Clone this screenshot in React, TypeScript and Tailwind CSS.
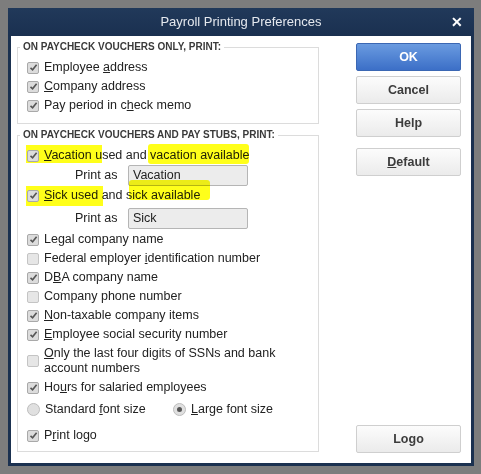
import React from 'react';

type Item = { label: React.ReactNode; checked: boolean };

const u = (s: string) => <span className="underline underline-offset-[1px]">{s}</span>;

const CheckBox: React.FC<{ checked: boolean }> = ({ checked }) => (
  <span
    className={`relative flex h-[12px] w-[12px] shrink-0 items-center justify-center rounded-[2px] border ${
      checked ? 'border-[#a9a9a9] bg-[#dcdcdc]' : 'border-[#c4c4c4] bg-[#e6e6e6]'
    }`}
  >
    {checked && (
      <svg width="9" height="9" viewBox="0 0 9 9">
        <path d="M1.5 4.8 L3.6 6.8 L7.6 1.8" fill="none" stroke="#555" strokeWidth="1.6" />
      </svg>
    )}
  </span>
);

const Radio: React.FC<{ checked: boolean }> = ({ checked }) => (
  <span className="flex h-[13px] w-[13px] shrink-0 items-center justify-center rounded-full border border-[#bdbdbd] bg-[#e0e0e0]">
    {checked && <span className="h-[5px] w-[5px] rounded-full bg-[#555]" />}
  </span>
);

const Row: React.FC<{ item: Item }> = ({ item }) => (
  <div className="flex h-[19px] items-center gap-[5px] pl-[9px]">
    <CheckBox checked={item.checked} />
    <span>{item.label}</span>
  </div>
);

const Group: React.FC<{ title: string; children: React.ReactNode; className?: string }> = ({ title, children, className }) => (
  <fieldset className={`border border-[#dcdcdc] px-0 ${className ?? ''}`}>
    <legend className="ml-[2px] px-[3px] text-[10px] font-bold leading-[12px] text-[#3a3a3a]">{title}</legend>
    {children}
  </fieldset>
);

const Btn: React.FC<{ children: React.ReactNode; primary?: boolean; className?: string }> = ({ children, primary, className }) => (
  <button
    className={`h-[28px] w-[105px] rounded-[2px] border text-[12.5px] font-bold ${
      primary
        ? 'border-[#3b67b3] bg-gradient-to-b from-[#6a9be0] to-[#3c6fc7] text-white'
        : 'border-[#cfcfcf] bg-gradient-to-b from-[#fcfcfc] to-[#ebebeb] text-[#3c3c3c]'
    } ${className ?? ''}`}
  >
    {children}
  </button>
);

const Hl: React.FC<{ className: string }> = ({ className }) => (
  <span className={`pointer-events-none absolute bg-[#ffff1a] mix-blend-multiply ${className}`} />
);

const PrintAs: React.FC<{ value: string }> = ({ value }) => (
  <div className="flex items-center pl-[57px]">
    <span className="w-[53px]">Print as</span>
    <div className="flex h-[21px] w-[120px] items-center rounded-[2px] border border-[#b5b5b5] bg-[#ececec] pl-[4px]">
      {value}
    </div>
  </div>
);

export default function App() {
  const first: Item[] = [
    { label: <>Employee {u('a')}ddress</>, checked: true },
    { label: <>{u('C')}ompany address</>, checked: true },
    { label: <>Pay period in c{u('h')}eck memo</>, checked: true },
  ];
  const rest: Item[] = [
    { label: <>Le{u('g')}al company name</>, checked: true },
    { label: <>Federal employer {u('i')}dentification number</>, checked: false },
    { label: <>D{u('B')}A company name</>, checked: true },
    { label: <>Company phone number</>, checked: false },
    { label: <>{u('N')}on-taxable company items</>, checked: true },
    { label: <>{u('E')}mployee social security number</>, checked: true },
  ];

  return (
    <div className="h-[474px] w-[481px] bg-[#7d7d7d] pl-[8px] pt-[8px] font-['Liberation_Sans',Arial,sans-serif] text-[12.5px] text-[#222]">
      <div className="flex h-[458px] w-[466px] flex-col rounded-t-[3px] bg-[#1b3150]">
        <div className="relative flex h-[28px] items-center justify-center bg-gradient-to-b from-[#21395a] to-[#1a3050] text-[13px] text-[#e4e8ee]">
          Payroll Printing Preferences
          <span className="absolute right-[11px] top-[8px] text-[14px] font-bold leading-[12px] text-white">✕</span>
        </div>
        <div className="mx-[3px] mb-[3px] flex flex-1 bg-white">
          <div className="flex w-[308px] flex-col gap-[5px] pl-[6px] pt-[5px]">
            <Group title="ON PAYCHECK VOUCHERS ONLY, PRINT:" className="h-[83px]">
              <div className="pt-[5px]">
                {first.map((it, i) => (
                  <Row key={i} item={it} />
                ))}
              </div>
            </Group>
            <Group title="ON PAYCHECK VOUCHERS AND PAY STUBS, PRINT:" className="h-[323px]">
              <div className="pt-[5px]">
                <div className="relative">
                  <Hl className="left-[8px] top-[-1px] h-[18px] w-[76px]" />
                  <Hl className="left-[130px] top-[-2px] h-[20px] w-[101px] rounded-[3px]" />
                  <Row item={{ label: <>{u('V')}acation used and vacation available</>, checked: true }} />
                </div>
                <PrintAs value="Vacation" />
                <div className="relative">
                  <Hl className="left-[8px] top-[0px] h-[20px] w-[77px]" />
                  <Hl className="left-[111px] top-[-6px] h-[20px] w-[81px] rounded-[3px]" />
                  <Row item={{ label: <>{u('S')}ick used and sick available</>, checked: true }} />
                </div>
                <div className="mt-[3px]">
                  <PrintAs value="Sick" />
                </div>
                <div className="mt-[1px]">
                  {rest.map((it, i) => (
                    <Row key={i} item={it} />
                  ))}
                </div>
                <div className="flex h-[34px] items-center gap-[5px] pl-[9px]">
                  <CheckBox checked={false} />
                  <span className="leading-[15px]">
                    {u('O')}nly the last four digits of SSNs and bank
                    <br />
                    account numbers
                  </span>
                </div>
                <Row item={{ label: <>Ho{u('u')}rs for salaried employees</>, checked: true }} />
                <div className="mt-[2px] flex h-[20px] items-center pl-[9px]">
                  <div className="flex w-[146px] items-center gap-[5px]">
                    <Radio checked={false} />
                    <span>Standard {u('f')}ont size</span>
                  </div>
                  <div className="flex items-center gap-[5px]">
                    <Radio checked={true} />
                    <span>{u('L')}arge font size</span>
                  </div>
                </div>
                <div className="mt-[7px]">
                  <Row item={{ label: <>P{u('r')}int logo</>, checked: true }} />
                </div>
              </div>
            </Group>
          </div>
          <div className="flex flex-1 flex-col items-end pr-[10px] pt-[7px] pb-[10px]">
            <Btn primary>OK</Btn>
            <Btn className="mt-[5px]">Cancel</Btn>
            <Btn className="mt-[5px]">Help</Btn>
            <Btn className="mt-[11px]">{u('D')}efault</Btn>
            <Btn className="mt-auto">Logo</Btn>
          </div>
        </div>
      </div>
    </div>
  );
}
